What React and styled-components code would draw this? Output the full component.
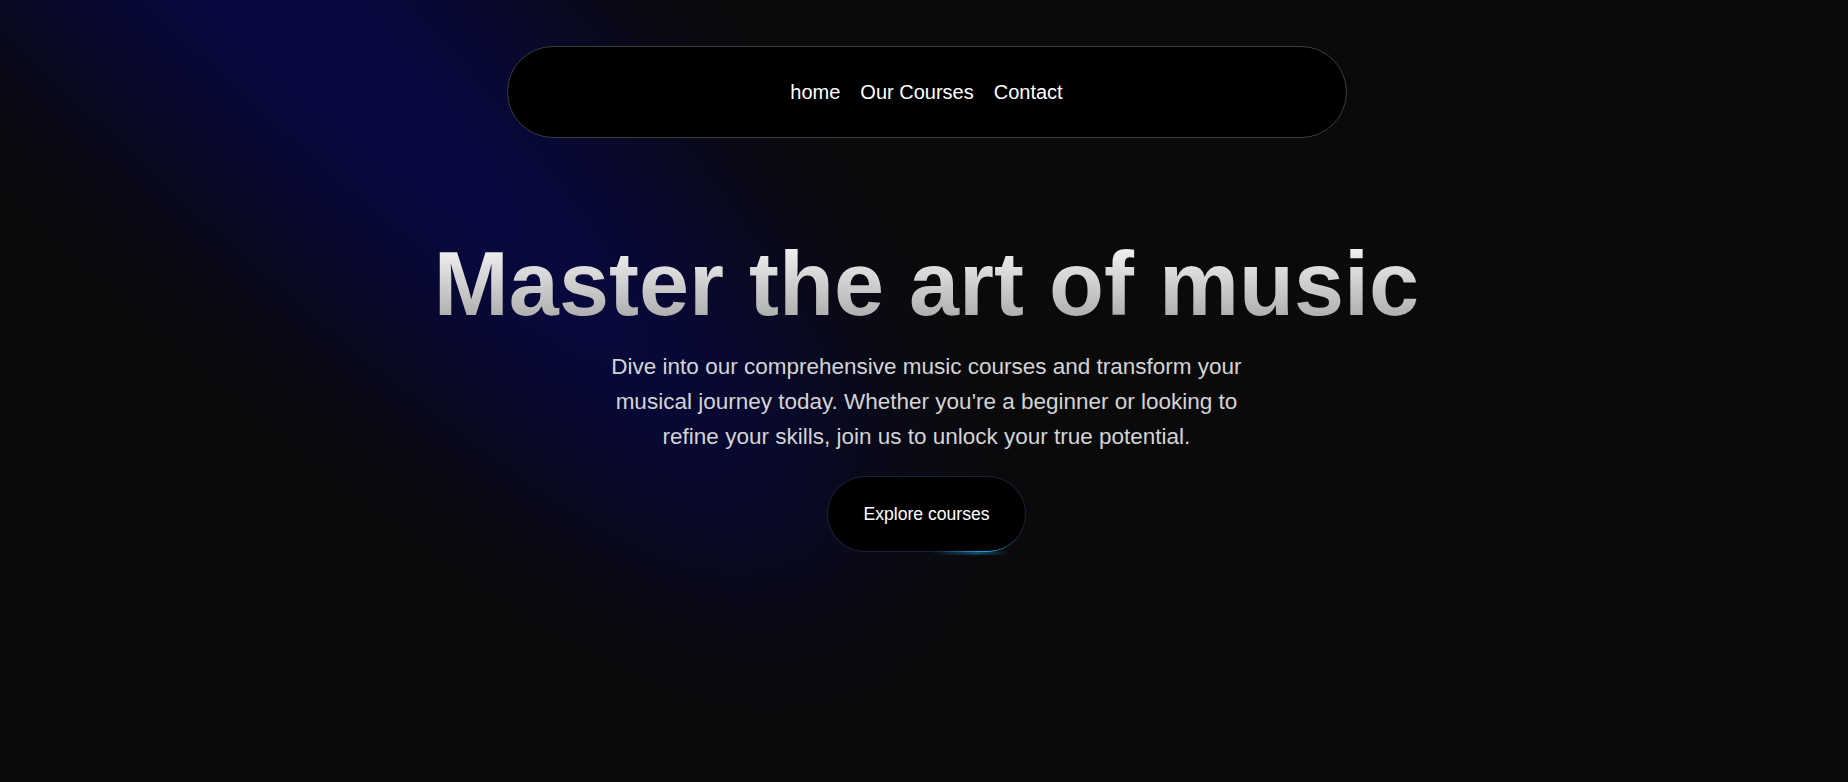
import React from "react";
import styled, { createGlobalStyle } from "styled-components";

const GlobalStyle = createGlobalStyle`
  html, body {
    margin: 0;
    padding: 0;
    background: #0a0a0a;
    overflow: hidden;
  }
  * { box-sizing: border-box; }
  body {
    font-family: "Liberation Sans", Arial, Helvetica, sans-serif;
    color: #fff;
  }
`;

const Page = styled.div`
  position: relative;
  min-height: 100vh;
  overflow: hidden;
  display: flex;
  flex-direction: column;
  align-items: center;
  padding: 46px 0 0 5px;
  background: #0a0a0a;
`;

const SpotlightSvg = styled.svg`
  position: absolute;
  inset: 0;
  width: 100%;
  height: 100%;
  pointer-events: none;
  z-index: 0;
`;

const Nav = styled.nav`
  position: relative;
  z-index: 2;
  width: 840px;
  height: 92px;
  border: 1px solid #3d3d3d;
  border-radius: 9999px;
  background: #000;
  display: flex;
  align-items: center;
  justify-content: center;
  gap: 20px;
`;

const NavLink = styled.a`
  font-size: 20px;
  color: #fff;
  text-decoration: none;
  cursor: pointer;
  line-height: 1.2;
`;

const Hero = styled.main`
  position: relative;
  z-index: 2;
  display: flex;
  flex-direction: column;
  align-items: center;
  margin-top: 101px;
`;

const Title = styled.h1`
  margin: 0;
  font-size: 90px;
  line-height: 1;
  font-weight: 700;
  white-space: nowrap;
  background: linear-gradient(to bottom, #fafafa, #a3a3a3);
  -webkit-background-clip: text;
  background-clip: text;
  color: transparent;
`;

const Lead = styled.p`
  margin: 20px 0 0;
  max-width: 660px;
  font-size: 22.5px;
  line-height: 35px;
  color: #d4d4d4;
  text-align: center;
`;

const ButtonFrame = styled.div`
  position: relative;
  margin-top: 22px;
  padding: 1px;
  border-radius: 9999px;
  background:
    radial-gradient(ellipse 24% 30% at 80% 100%, #2aa7ec 0%, rgba(42, 167, 236, 0.45) 50%, rgba(42, 167, 236, 0) 100%),
    #1b2434;
`;

const Glow = styled.span`
  position: absolute;
  left: 52%;
  right: 8%;
  bottom: -2px;
  height: 2px;
  border-radius: 2px;
  background: linear-gradient(to right, rgba(30, 150, 220, 0), rgba(30, 150, 220, 0.8) 60%, rgba(30, 150, 220, 0));
  filter: blur(1px);
`;

const Button = styled.button`
  position: relative;
  height: 74px;
  padding: 0 35px;
  border: 0;
  border-radius: 9999px;
  background: #000;
  color: #fff;
  font-family: "Liberation Sans", Arial, sans-serif;
  font-size: 17.6px;
  cursor: pointer;
  display: flex;
  align-items: center;
`;

function Spotlight() {
  return (
    <SpotlightSvg aria-hidden="true">
      <defs>
        <filter id="spotBlur" x="-50%" y="-50%" width="200%" height="200%">
          <feGaussianBlur stdDeviation="100" />
        </filter>
      </defs>
      <ellipse
        cx="160"
        cy="-120"
        rx="980"
        ry="175"
        transform="rotate(45 160 -120)"
        fill="#0000ff"
        fillOpacity="0.24"
        filter="url(#spotBlur)"
      />
    </SpotlightSvg>
  );
}

export default function App() {
  return (
    <>
      <GlobalStyle />
      <Page>
        <Spotlight />
        <Nav>
          <NavLink>home</NavLink>
          <NavLink>Our Courses</NavLink>
          <NavLink>Contact</NavLink>
        </Nav>
        <Hero>
          <Title>Master the art of music</Title>
          <Lead>
            Dive into our comprehensive music courses and transform your musical
            journey today. Whether you're a beginner or looking to refine your
            skills, join us to unlock your true potential.
          </Lead>
          <ButtonFrame>
            <Button>Explore courses</Button>
            <Glow />
          </ButtonFrame>
        </Hero>
      </Page>
    </>
  );
}
